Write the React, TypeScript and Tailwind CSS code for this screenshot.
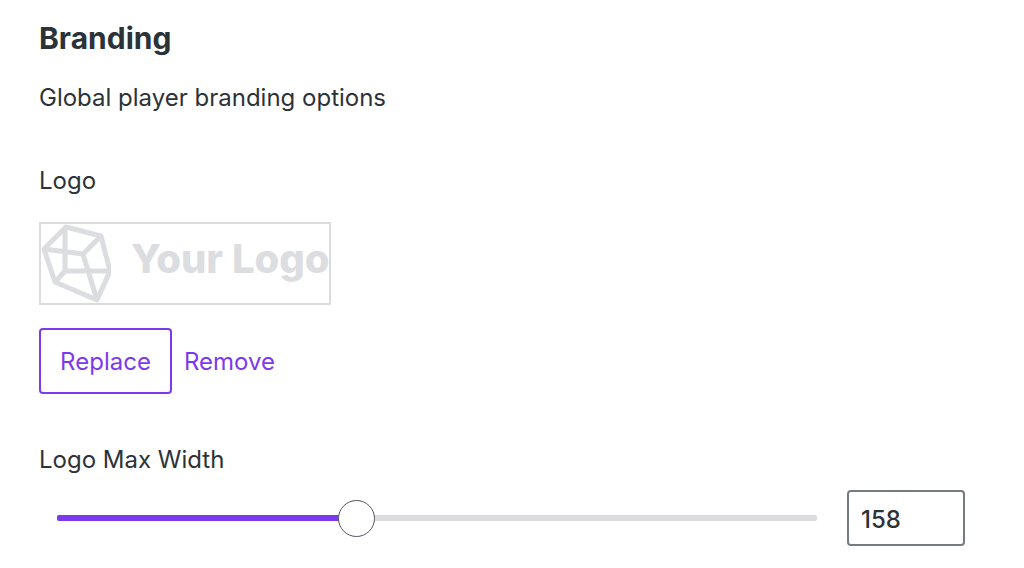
import { useState } from "react"

const MIN_WIDTH = 1
const MAX_WIDTH = 400

function LogoPreview() {
  return (
    <div className="flex h-[83px] w-[292px] items-center border-2 border-[#dcdcde] text-[#dcdde0]">
      <svg
        viewBox="0 0 70 79"
        className="h-[79px] w-[70px] shrink-0"
        fill="none"
        stroke="currentColor"
        strokeWidth="5"
        strokeLinejoin="round"
        aria-hidden="true"
      >
        <path d="M25 3 60 12 69 47 56 76 14 58 3 25Z" />
        <path d="M24 3V47L14 58M24 47H69M3 25 42 30 60 12M42 30 56 76" />
      </svg>
      <span className="ml-5 whitespace-nowrap pb-[10px] font-[Inter,sans-serif] text-[40px] font-extrabold leading-none">
        Your Logo
      </span>
    </div>
  )
}

export default function App() {
  const [hasLogo, setHasLogo] = useState(true)
  const [maxWidth, setMaxWidth] = useState(158)

  const percent = ((maxWidth - MIN_WIDTH) / (MAX_WIDTH - MIN_WIDTH)) * 100

  return (
    <main className="min-h-screen bg-white pb-6 pl-[39px] pr-[59px] pt-[18px] font-[Inter,sans-serif] text-2xl leading-8 text-[#2c3338]">
      <h1 className="text-[30px] font-bold leading-10">Branding</h1>
      <p className="mt-6">Global player branding options</p>

      {/* Logo */}
      <section className="mt-[51px]">
        <h2>Logo</h2>
        <div className="mt-[25px]">{hasLogo && <LogoPreview />}</div>
        <div className="mt-[23px] flex items-center gap-3 text-[#7c3aed]">
          <button
            type="button"
            onClick={() => setHasLogo(true)}
            className="h-[66px] w-[133px] rounded-[4px] border-2 border-[#7c3aed] pt-[2px]"
          >
            Replace
          </button>
          <button type="button" onClick={() => setHasLogo(false)} className="pt-[2px]">
            Remove
          </button>
        </div>
      </section>

      {/* Logo width */}
      <section className="mt-[50px]">
        <label htmlFor="logo-width">Logo Max Width</label>
        <div className="mt-[14px] flex items-center gap-3">
          <div className="grid flex-1 items-center">
            <div className="col-start-1 row-start-1 mx-[18px] h-[6px] overflow-hidden rounded-[2px] bg-[#dcdcde]">
              <div className="h-full bg-[#7c3aed]" style={{ width: `${percent}%` }} />
            </div>
            <input
              id="logo-width"
              type="range"
              min={MIN_WIDTH}
              max={MAX_WIDTH}
              value={maxWidth}
              onChange={(e) => setMaxWidth(Number(e.target.value))}
              className="col-start-1 row-start-1 h-[37px] w-full cursor-pointer appearance-none bg-transparent [&::-webkit-slider-thumb]:size-[37px] [&::-webkit-slider-thumb]:appearance-none [&::-webkit-slider-thumb]:rounded-full [&::-webkit-slider-thumb]:border [&::-webkit-slider-thumb]:border-[#50575e] [&::-webkit-slider-thumb]:bg-white"
            />
          </div>
          <input
            type="number"
            aria-label="Logo max width in pixels"
            min={MIN_WIDTH}
            max={MAX_WIDTH}
            value={maxWidth}
            onChange={(e) => setMaxWidth(Number(e.target.value))}
            className="h-[56px] w-[118px] appearance-none rounded-[4px] border-2 border-[#757b81] px-3 pt-[2px] font-medium [&::-webkit-inner-spin-button]:appearance-none"
          />
        </div>
      </section>
    </main>
  )
}
